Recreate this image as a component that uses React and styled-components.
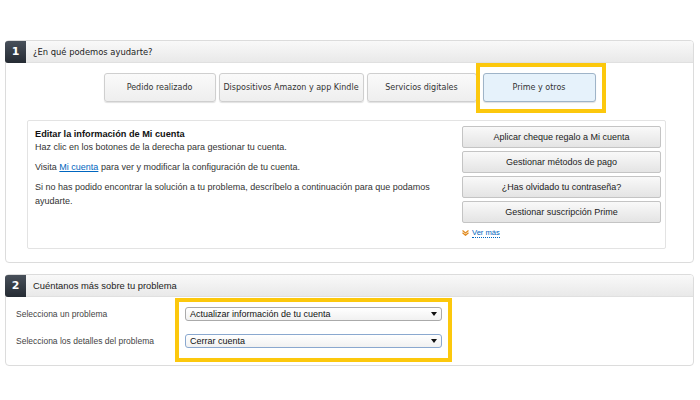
import React from 'react';
import styled, { createGlobalStyle } from 'styled-components';

const GlobalStyle = createGlobalStyle`
  html, body {
    margin: 0;
    padding: 0;
    background: #fff;
  }
  body {
    font-family: "Liberation Sans", Arial, sans-serif;
    color: #333;
  }
`;

const Page = styled.div`
  width: 700px;
  height: 400px;
  box-sizing: border-box;
  padding: 40px 6px 0 5px;
  display: flex;
  flex-direction: column;
  gap: 11px;
`;

// one numbered step box
const Section = styled.section`
  border: 1px solid #dcdcdc;
  border-radius: 4px;
  box-sizing: border-box;
  height: ${(p) => p.h}px;
  display: flex;
  flex-direction: column;
`;

const Header = styled.div`
  height: 21px;
  display: flex;
  align-items: center;
  background: linear-gradient(#f9f9f9, #e9e9e9);
  border-bottom: 1px solid #e0e0e0;
  border-radius: 3px 3px 0 0;
`;

const StepNum = styled.span`
  width: 21px;
  height: 22px;
  margin: -1px 0 -1px -1px;
  background: linear-gradient(#48505a, #252b33);
  color: #fff;
  font-family: "DejaVu Sans", Verdana, sans-serif;
  font-weight: bold;
  font-size: 11px;
  display: flex;
  align-items: center;
  justify-content: center;
  border-radius: 3px 0 0 3px;
`;

const HeaderTitle = styled.span`
  margin-left: 7px;
  font-size: ${(p) => (p.verdana ? '8.4px' : '9.4px')};
  font-family: ${(p) => (p.verdana ? '"DejaVu Sans", Verdana, sans-serif' : '"Liberation Sans", Arial, sans-serif')};
  color: #222;
`;

const TopicRow = styled.div`
  display: flex;
  justify-content: center;
  gap: 3px;
  margin-top: 10px;
`;

const TopicButton = styled.div`
  position: relative;
  width: ${(p) => p.w}px;
  height: 29px;
  box-sizing: border-box;
  margin-left: ${(p) => (p.active ? '3px' : '0')};
  border: 1px solid ${(p) => (p.active ? '#9fb4c8' : '#cfcfcf')};
  border-radius: 3px;
  background: ${(p) => (p.active ? '#e6f2fb' : 'linear-gradient(#fafafa, #eeeeee)')};
  box-shadow: 0 1px 1px rgba(0, 0, 0, 0.12);
  font-family: "DejaVu Sans", Verdana, sans-serif;
  font-size: 8px;
  color: #333;
  display: flex;
  align-items: center;
  justify-content: center;
  white-space: nowrap;
`;

// yellow annotation frame drawn over the screenshot
const Highlight = styled.span`
  position: absolute;
  left: ${(p) => p.l}px;
  right: ${(p) => p.r}px;
  top: ${(p) => p.t}px;
  bottom: ${(p) => p.b}px;
  border: 4px solid #fcc80d;
  pointer-events: none;
`;

const InfoBox = styled.div`
  margin: 18px 27px 0 21px;
  height: 129px;
  box-sizing: border-box;
  border: 1px solid #e3e3e3;
  border-radius: 2px;
  display: flex;
  justify-content: space-between;
  padding: 5px 4px 0 7px;
`;

const InfoText = styled.div`
  font-size: 9px;
  line-height: 14px;
  color: #333;
  padding-top: 2px;

  p {
    margin: 0 0 6px;
  }
`;

const InfoTitle = styled.div`
  font-weight: bold;
  font-size: 9.2px;
  color: #111;
  line-height: 12px;
`;

const Link = styled.a`
  color: #0066c0;
  text-decoration: underline;
`;

const ActionCol = styled.div`
  display: flex;
  flex-direction: column;
  gap: 3px;
  width: 199px;
`;

const ActionButton = styled.div`
  height: 22px;
  box-sizing: border-box;
  border: 1px solid #c4c4c4;
  border-radius: 2px;
  background: linear-gradient(#f9f9f9, #e4e4e4);
  font-size: 9px;
  color: #222;
  display: flex;
  align-items: center;
  justify-content: center;
`;

const MoreLink = styled.div`
  display: flex;
  align-items: center;
  gap: 3px;
  margin: 2px 0 0 0;
  font-size: 7.6px;

  a {
    color: #0066c0;
    text-decoration: none;
    border-bottom: 1px dotted #0066c0;
    line-height: 9px;
  }
`;

const FormBody = styled.div`
  display: flex;
  flex-direction: column;
  gap: 13px;
  padding: 10px 0 0 10px;
`;

const FormRow = styled.div`
  display: flex;
  align-items: center;
`;

const Label = styled.span`
  width: 169px;
  font-size: 8.5px;
  color: #444;
`;

const SelectWrap = styled.div`
  position: relative;
`;

const SelectBox = styled.div`
  width: 257px;
  height: 14px;
  box-sizing: border-box;
  border: 1px solid ${(p) => (p.focus ? '#8aa8cf' : '#aaa')};
  border-radius: 3px;
  background: linear-gradient(#fff, #f1f1f1);
  font-size: 9px;
  color: #111;
  display: flex;
  align-items: center;
  justify-content: space-between;
  padding: 0 4px;
`;

const Arrow = styled.span`
  width: 0;
  height: 0;
  border-left: 3px solid transparent;
  border-right: 3px solid transparent;
  border-top: 4px solid #111;
`;

const topics = [
  { label: 'Pedido realizado', w: 112 },
  { label: 'Dispositivos Amazon y app Kindle', w: 145 },
  { label: 'Servicios digitales', w: 110 },
  { label: 'Prime y otros', w: 113, active: true },
];

const actions = [
  'Aplicar cheque regalo a Mi cuenta',
  'Gestionar métodos de pago',
  '¿Has olvidado tu contraseña?',
  'Gestionar suscripción Prime',
];

export default function App() {
  return (
    <>
      <GlobalStyle />
      <Page>
        <Section h={223}>
          <Header>
            <StepNum>1</StepNum>
            <HeaderTitle verdana>¿En qué podemos ayudarte?</HeaderTitle>
          </Header>
          <TopicRow>
            {topics.map((t) => (
              <TopicButton key={t.label} w={t.w} active={t.active}>
                {t.label}
                {t.active && <Highlight l={-8} r={-11} t={-11} b={-12} />}
              </TopicButton>
            ))}
          </TopicRow>
          <InfoBox>
            <InfoText>
              <InfoTitle>Editar la información de Mi cuenta</InfoTitle>
              <p>Haz clic en los botones de la derecha para gestionar tu cuenta.</p>
              <p>
                Visita <Link href="#">Mi cuenta</Link> para ver y modificar la configuración de tu cuenta.
              </p>
              <p>
                Si no has podido encontrar la solución a tu problema, descríbelo a continuación para que podamos
                <br />
                ayudarte.
              </p>
            </InfoText>
            <ActionCol>
              {actions.map((a) => (
                <ActionButton key={a}>{a}</ActionButton>
              ))}
              <MoreLink>
                <svg width="7" height="6" viewBox="0 0 7 6">
                  <path d="M0.5 0.5 L3.5 3 L6.5 0.5 M0.5 2.8 L3.5 5.3 L6.5 2.8" stroke="#e08a1e" strokeWidth="1.2" fill="none" />
                </svg>
                <a href="#">Ver más</a>
              </MoreLink>
            </ActionCol>
          </InfoBox>
        </Section>

        <Section h={92}>
          <Header>
            <StepNum>2</StepNum>
            <HeaderTitle>Cuéntanos más sobre tu problema</HeaderTitle>
          </Header>
          <FormBody>
            <FormRow>
              <Label>Selecciona un problema</Label>
              <SelectWrap>
                <SelectBox>
                  Actualizar información de tu cuenta
                  <Arrow />
                </SelectBox>
                <Highlight l={-10} r={-10} t={-9} b={-41} />
              </SelectWrap>
            </FormRow>
            <FormRow>
              <Label>Selecciona los detalles del problema</Label>
              <SelectBox focus>
                Cerrar cuenta
                <Arrow />
              </SelectBox>
            </FormRow>
          </FormBody>
        </Section>
      </Page>
    </>
  );
}
